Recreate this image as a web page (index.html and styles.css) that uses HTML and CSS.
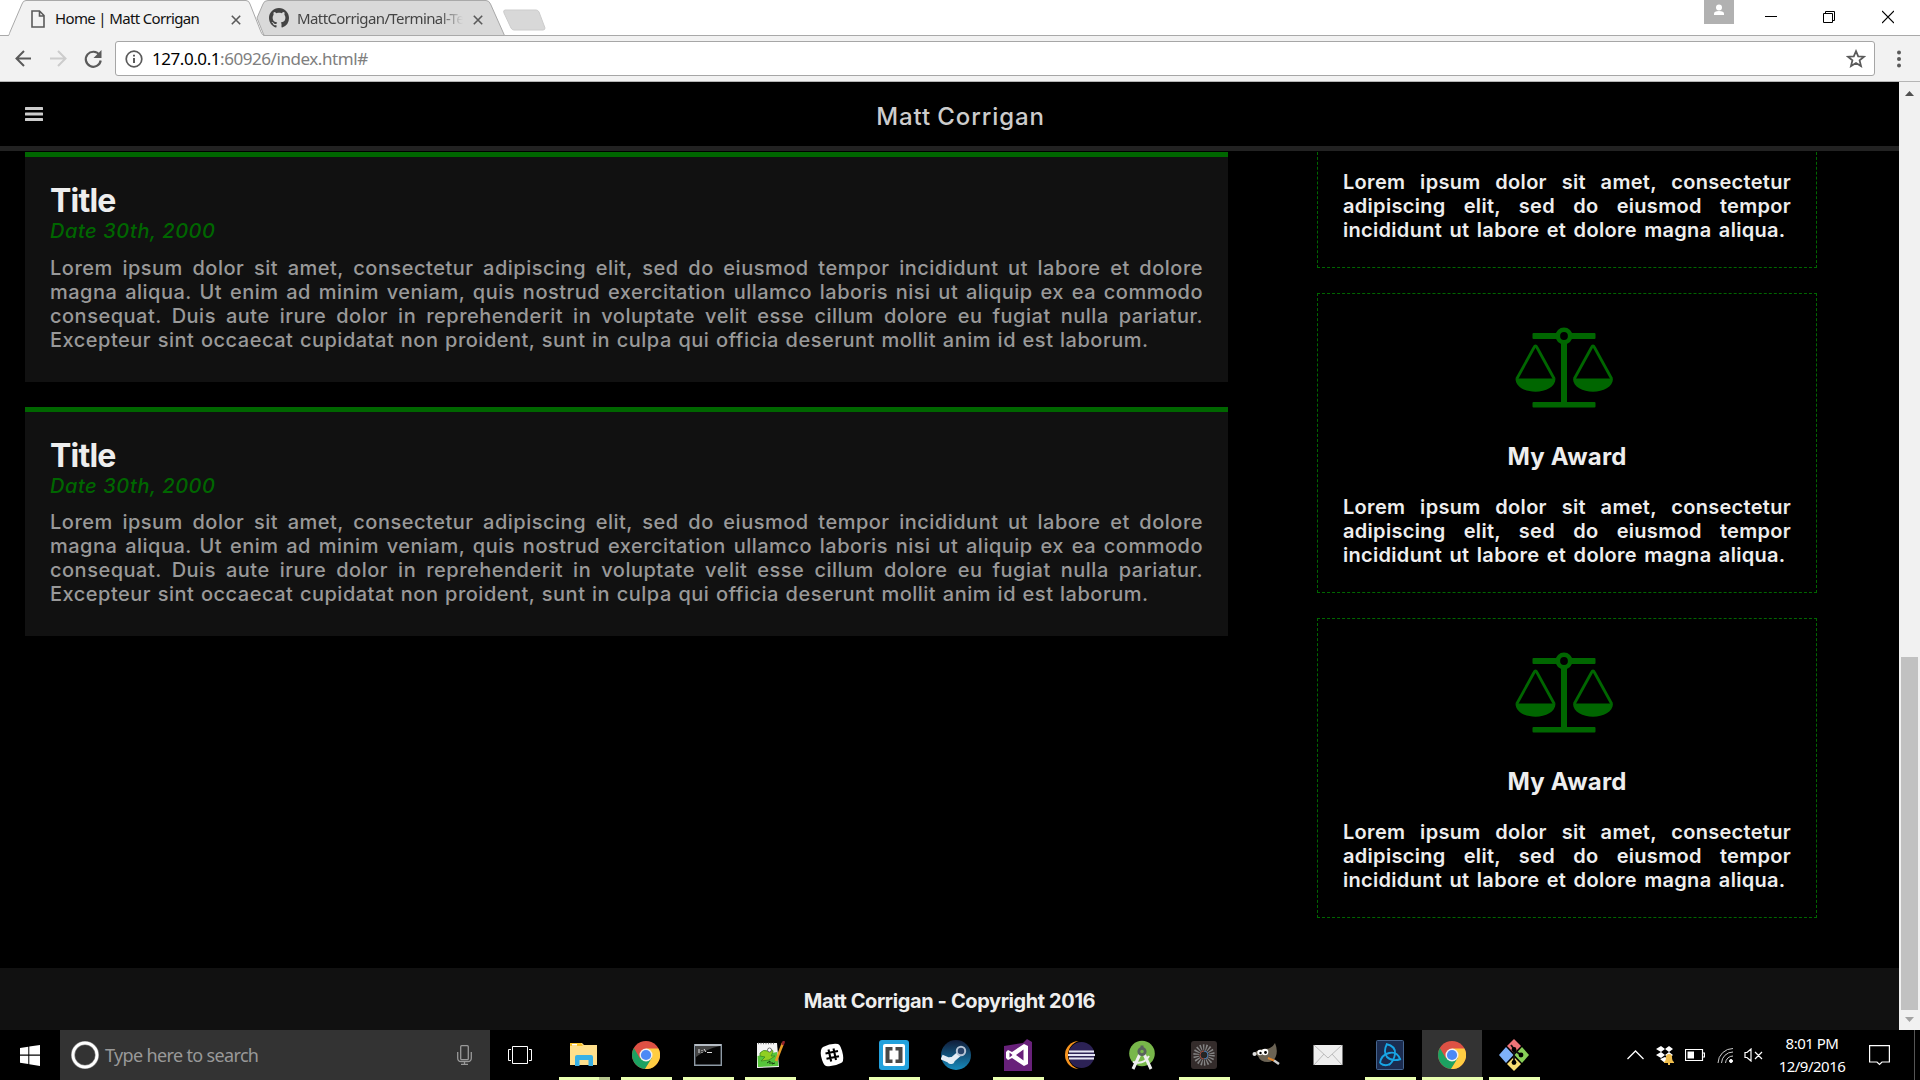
FILE: index.html
```html
<!DOCTYPE html>
<html lang="en">
<head>
<meta charset="utf-8">
<title>Home | Matt Corrigan</title>
<link rel="stylesheet" href="styles.css">
</head>
<body>
<svg class="defs" width="0" height="0">
  <defs>
    <symbol id="scales" viewBox="0 0 98 81">
      <g fill="#060">
        <rect x="17.500" y="6" width="63" height="6" rx="1"/>
        <rect x="17.500" y="75" width="63" height="5.500" rx="1"/>
        <rect x="46" y="12" width="6" height="65"/>
        <path d="M.5 51.500H40.500C40.500 69 .5 69 .5 51.500ZM58 51.500H98C98 69 58 69 58 51.500Z"/>
      </g>
      <circle cx="49" cy="9" r="6.200" fill="#000" stroke="#060" stroke-width="4.600"/>
      <path d="M1.700 52 19 20.500Q20.500 17.500 22 20.500L39.300 52M59.200 52 76.500 20.500Q78 17.500 79.500 20.500L96.800 52" fill="none" stroke="#060" stroke-width="2.800"/>
    </symbol>
    <symbol id="chrome" viewBox="0 0 28 28">
      <circle cx="14" cy="14" r="14" fill="#dd5144"/>
      <path d="M14 14 8 17.500 1.900 7A14 14 0 0 0 13 28L20 17.500Z" fill="#1ca261"/>
      <path d="M14 7.500H26.400A14 14 0 0 1 13 28L19.800 17Z" fill="#ffcd42"/>
      <circle cx="14" cy="14" r="6.500" fill="#f1f1f1"/>
      <circle cx="14" cy="14" r="5.100" fill="#4b89f5"/>
    </symbol>
  </defs>
</svg>

<header class="tabstrip">
  <div class="tab tab-active">
    <svg class="tab-shape" width="260" height="36"><path d="M0 35.500C3 35.500 2 34 3 32L15 4Q16 .5 19 .5H239Q242 .5 243 4L254 32Q255 35.500 258 35.500" fill="#f2f2f2" stroke="#a9a9a9"/><path d="M2 35.500H256" stroke="#f2f2f2"/></svg>
    <svg class="tab-page" width="14" height="18" fill="none" stroke="#5a5a5a" stroke-width="1.600"><path d="M1 1H8.500L13 5.500V17H1ZM8.500 1V6H13"/></svg>
    <span class="tab-title tab-title-home">Home | Matt Corrigan</span>
    <svg class="tab-close" width="10" height="10" stroke="#5a5a5a" stroke-width="1.600"><path d="M.8.8 9.200 9.200M9.200.8.8 9.200"/></svg>
  </div>
  <div class="tab tab-back">
    <svg class="tab-shape" width="252" height="36"><path d="M1 18 7 4Q8 .5 12 .5H230Q233 .5 234.500 4L248.500 35.500H8Z" fill="#d9d9d9" stroke="#a9a9a9"/></svg>
    <svg class="tab-hub" width="20" height="20" viewBox="0 0 16 16" fill="#444"><path d="M8 0C3.580 0 0 3.580 0 8c0 3.540 2.290 6.530 5.470 7.590.4.070.55-.17.55-.38 0-.19-.01-.82-.01-1.490-2.010.37-2.530-.49-2.690-.94-.09-.23-.48-.94-.82-1.130-.28-.15-.68-.52-.01-.53.63-.01 1.080.58 1.230.82.72 1.210 1.870.87 2.330.66.070-.52.280-.87.510-1.070-1.780-.2-3.640-.89-3.640-3.950 0-.87.310-1.590.820-2.150-.08-.2-.36-1.020.080-2.120 0 0 .67-.21 2.200.82.640-.18 1.320-.27 2-.27s1.360.09 2 .27c1.530-1.040 2.200-.82 2.200-.82.440 1.100.160 1.920.080 2.120.510.560.820 1.270.820 2.150 0 3.070-1.870 3.750-3.650 3.950.290.250.540.730.540 1.480 0 1.070-.01 1.930-.01 2.200 0 .21.150.46.550.38A8.010 8.010 0 0 0 16 8c0-4.420-3.580-8-8-8z"/></svg>
    <span class="tab-title tab-title-hub">MattCorrigan/Terminal-Te</span>
    <svg class="tab-close" width="10" height="10" stroke="#5a5a5a" stroke-width="1.600"><path d="M.8.8 9.200 9.200M9.200.8.8 9.200"/></svg>
  </div>
  <svg class="newtab" width="44" height="22"><path d="M2 1H33Q35 1 36 3L42 19Q42 21 40 21H11Q9 21 8 19L1 4Q0 1 2 1Z" fill="#d8d8d8" stroke="#ccc"/></svg>
  <div class="window-controls">
    <svg class="profile" width="30" height="24"><path fill="#b1b1b1" d="M0 0H30V24H0Z"/><circle cx="15" cy="7.500" r="3" fill="#fff"/><path d="M10 15V13.500Q10 11 15 11T20 13.500V15Z" fill="#fff"/></svg>
    <svg class="minimize" width="12" height="24"><path d="M0 16.500H12" stroke="#000"/></svg>
    <svg class="restore" width="12" height="24" fill="none" stroke="#000"><path d="M.5 13.500H9.500V22.500H.5ZM2.500 13V11.500H11.500V20.500H10"/></svg>
    <svg class="shut" width="12" height="24" stroke="#000" stroke-width="1.200"><path d="M0 11 12 23M12 11 0 23"/></svg>
  </div>
</header>

<div class="toolbar">
  <svg width="100" height="24" class="nav-icons" fill="none" stroke-width="2">
    <path d="M16 12.500H1.500M9 5 1.500 12.500 9 20" stroke="#5a5a5a"/>
    <path d="M35 12.500H50M43 5 50.500 12.500 43 20" stroke="#ccc"/>
    <path d="M84.500 9A7.500 7.500 0 1 0 85.700 14.500" stroke="#5a5a5a" stroke-width="2.200"/>
    <path d="M86.500 4V12H78.500Z" fill="#5a5a5a"/>
  </svg>
  <div class="omnibox">
    <svg width="18" height="18" fill="none" stroke="#5a5a5a" stroke-width="1.700"><circle cx="9" cy="9" r="7.800"/><path d="M9 8V13M9 4.800V6.600" stroke-width="2"/></svg>
    <span class="url"><b>127.0.0.1</b>:60926/index.html#</span>
    <svg class="star" width="20" height="19" viewBox="0 0 20 19" fill="none" stroke="#5a5a5a" stroke-width="1.800"><path d="M10 2.200 12.200 7.300 18 7.700 13.600 11.400 15 17 10 14 5 17 6.400 11.400 2 7.700 7.800 7.300Z"/></svg>
  </div>
  <svg class="dots" width="6" height="18" fill="#5a5a5a"><circle cx="3" cy="2.500" r="2"/><circle cx="3" cy="9" r="2"/><circle cx="3" cy="15.500" r="2"/></svg>
</div>

<div class="viewport">
  <div class="page">
    <nav class="navbar">
      <svg class="menu" width="18" height="16" fill="#ccc"><rect y="1" width="18" height="3" rx=".6"/><rect y="6.500" width="18" height="3" rx=".6"/><rect y="12" width="18" height="3" rx=".6"/></svg>
      <span class="brand">Matt Corrigan</span>
    </nav>
    <main class="content">
      <section class="posts">
        <article class="post">
          <h2>Title</h2>
          <em class="date">Date 30th, 2000</em>
          <p><span>Lorem ipsum dolor sit amet, consectetur adipiscing elit, sed do eiusmod tempor incididunt ut labore et dolore</span>
          <span>magna aliqua. Ut enim ad minim veniam, quis nostrud exercitation ullamco laboris nisi ut aliquip ex ea commodo</span>
          <span>consequat. Duis aute irure dolor in reprehenderit in voluptate velit esse cillum dolore eu fugiat nulla pariatur.</span>
          <span class="last">Excepteur sint occaecat cupidatat non proident, sunt in culpa qui officia deserunt mollit anim id est laborum.</span></p>
        </article>
        <article class="post">
          <h2>Title</h2>
          <em class="date">Date 30th, 2000</em>
          <p><span>Lorem ipsum dolor sit amet, consectetur adipiscing elit, sed do eiusmod tempor incididunt ut labore et dolore</span>
          <span>magna aliqua. Ut enim ad minim veniam, quis nostrud exercitation ullamco laboris nisi ut aliquip ex ea commodo</span>
          <span>consequat. Duis aute irure dolor in reprehenderit in voluptate velit esse cillum dolore eu fugiat nulla pariatur.</span>
          <span class="last">Excepteur sint occaecat cupidatat non proident, sunt in culpa qui officia deserunt mollit anim id est laborum.</span></p>
        </article>
      </section>
      <aside class="awards">
        <div class="award award-cut">
          <p><span>Lorem ipsum dolor sit amet, consectetur</span>
          <span>adipiscing elit, sed do eiusmod tempor</span>
          <span class="last">incididunt ut labore et dolore magna aliqua.</span></p>
        </div>
        <div class="award">
          <svg class="scales" width="98" height="81"><use href="#scales"/></svg>
          <h3>My Award</h3>
          <p><span>Lorem ipsum dolor sit amet, consectetur</span>
          <span>adipiscing elit, sed do eiusmod tempor</span>
          <span class="last">incididunt ut labore et dolore magna aliqua.</span></p>
        </div>
        <div class="award">
          <svg class="scales" width="98" height="81"><use href="#scales"/></svg>
          <h3>My Award</h3>
          <p><span>Lorem ipsum dolor sit amet, consectetur</span>
          <span>adipiscing elit, sed do eiusmod tempor</span>
          <span class="last">incididunt ut labore et dolore magna aliqua.</span></p>
        </div>
      </aside>
    </main>
    <footer class="footer"><span>Matt Corrigan - Copyright 2016</span></footer>
  </div>
  <div class="scrollbar">
    <svg width="9" height="5"><path d="M0 5 4.500 0 9 5Z" fill="#505050"/></svg>
    <div class="thumb"></div>
    <svg width="9" height="5"><path d="M0 0H9L4.500 5Z" fill="#a3a3a3"/></svg>
  </div>
</div>

<div class="taskbar">
  <svg class="start" width="20" height="21" fill="#fff"><path d="M0 3 8.300 1.700V9.500H0ZM9.300 1.500 20 0V9.500H9.300ZM0 10.700H8.300V19L0 17.700ZM9.300 10.700H20V21L9.300 19.300Z"/></svg>
  <div class="search">
    <svg width="28" height="28"><circle cx="14" cy="14" r="12" fill="none" stroke="#888" stroke-width="4"/><circle cx="14" cy="14" r="12" fill="none" stroke="#fff" stroke-width="2.800"/></svg>
    <span>Type here to search</span>
    <svg class="mic" width="15" height="20" fill="none" stroke="#999" stroke-width="1.300"><rect x="3.700" y=".7" width="7.600" height="14" rx="1"/><path d="M.7 7V13Q.7 16.500 4 16.500H11Q14.300 16.500 14.300 13V7M7.500 17V19.300M4 19.300H11"/></svg>
  </div>
  <svg class="taskview" width="24" height="20" fill="none" stroke="#fff"><path d="M4.500 1.500H19.500V18.500H4.500ZM3 4.500H.5V15.500H3M21 4.500H23.500V15.500H21"/></svg>
  <div class="apps">
    <div class="app open grouped"><svg width="30" height="30"><path d="M1 4V3H13L15 5H28V25H1Z" fill="#ffe08c"/><path d="M1 3H12L14 6H1Z" fill="#f9c22b"/><path d="M3 4H8V5.500H3Z" fill="#fff"/><path d="M6 26V17Q6 15 8 15H22Q24 15 24 17V26H19.500V20H10.500V26Z" fill="#38b1e6"/></svg></div>
    <div class="app open"><svg width="28" height="28"><use href="#chrome"/></svg></div>
    <div class="app open"><svg width="28" height="24"><path d="M.7 1.700H27.300V22.300H.7Z" fill="#050505" stroke="#8e9aa5" stroke-width="1.400"/><path d="M1 1H27V3H1Z" fill="#b5bcc4"/><path d="M2 3H26Q12 6 2 14Z" fill="#444"/><path d="M4 7H6M4 9H6M8 7V8M8 9V10M10 6 12 9M13 9.500H18" stroke="#ddd"/></svg></div>
    <div class="app open"><svg width="30" height="28"><path d="M2 2H22L24 26 2 27Z" fill="#f4f4f4"/><path d="M2.500 15 22 11 23.500 25 3 26Z" fill="#57c63b"/><path d="M3 2.500H20" stroke="#777" stroke-width="1.600" stroke-dasharray="1 1.500"/><path d="M5 12Q8 8 13 10 18 7 18 11L16 15H20L14 19 6 20 10 16 5 15Z" fill="#91cf21" stroke="#3c8a24" stroke-width=".8"/><circle cx="14.500" cy="9" r="2" fill="#fff" stroke="#555" stroke-width=".8"/><path d="M12 22 15 20V23M17 21V23L20 22" stroke="#163a10" fill="none"/><path d="M28 2 21 20" stroke="#e69c24" stroke-width="2.500"/><path d="M29 0 27.500 4" stroke="#94232d" stroke-width="2.500"/></svg></div>
    <div class="app"><svg width="24" height="24"><path d="M3 4Q11 0 18 1 21 2 23 12 24 19 21 20 14 24 6 23 3 22 1 13 0 6 3 4Z" fill="#fff"/><path d="M8.500 6.500 11.200 18.500M13.500 5.500 16 17M5.500 10.500 18 8M6.500 15.700 19 13.200" stroke="#000" stroke-width="2.100"/></svg></div>
    <div class="app open"><svg width="30" height="30"><rect width="30" height="30" rx="3" fill="#22a1dd"/><rect x="4" y="4" width="22" height="22" rx="2" fill="#fff"/><path d="M13.500 7V10.500H10.500V19.500H13.500V23H6.500V7ZM16.500 7H23.500V23H16.500V19.500H19.500V10.500H16.500Z" fill="#484848"/></svg></div>
    <div class="app"><svg width="30" height="30"><defs><linearGradient id="steam" x2="0" y2="1"><stop stop-color="#101b38"/><stop offset="1" stop-color="#178bbd"/></linearGradient></defs><circle cx="15" cy="15" r="15" fill="url(#steam)"/><path d="M.6 17 10 21 18 14" stroke="#e5edf5" stroke-width="5" fill="none"/><circle cx="10" cy="20.500" r="3.500" fill="#e5edf5"/><circle cx="20" cy="11" r="4.200" fill="#29446a" stroke="#b6c4d5" stroke-width="2"/></svg></div>
    <div class="app open"><svg width="30" height="32"><path d="M1 7 20 4 24 0 29 3V32H1Z" fill="#68217a"/><path d="M5 11 9 13 21 5 25 7V25L21 27 9 19 5 21 3 19V13Z" fill="#fff"/><path d="M6.500 13.500V18.500L9.500 16ZM13 16 20.500 10.500V21.500Z" fill="#68217a"/></svg></div>
    <div class="app"><svg width="30" height="30"><circle cx="14" cy="15" r="14" fill="#f7941e"/><circle cx="17.500" cy="15" r="14.500" fill="#000"/><circle cx="16.500" cy="15" r="13" fill="#2c2255"/><path d="M4 11.500H29M3 15H30M4 18.500H29" stroke="#e5e5f4" stroke-width="2"/></svg></div>
    <div class="app"><svg width="28" height="30"><circle cx="14" cy="13.500" r="12.800" fill="#78b74a"/><path d="M12 14 5 29M16 14 23 29" stroke="#eee" stroke-width="3"/><path d="M5 22Q16 25 21 16" fill="none" stroke="#eee" stroke-width="2"/><circle cx="14" cy="11.500" r="3.200" fill="none" stroke="#59635c" stroke-width="2.800"/><path d="M14 5.500V9" stroke="#59635c" stroke-width="3"/></svg></div>
    <div class="app open"><svg width="28" height="30"><rect x="1" y="1" width="26" height="28" rx="3" fill="#342c2b"/><circle cx="14" cy="15" r="7.700" fill="none" stroke="#858585" stroke-width="6" stroke-dasharray="1.300 1.400"/><circle cx="14" cy="15" r="4" fill="#252525" stroke="#9b4c3e"/><path d="M14 11A4 4 0 0 1 14 19" stroke="#3679b1" fill="none"/></svg></div>
    <div class="app"><svg width="30" height="26"><path d="M3 11Q8 7 14 7 21 7 24 1 27 8 25 14 23 20 17 20 9 20 7 14Z" fill="#6b6354"/><circle cx="3.500" cy="12" r="2" fill="#ddd"/><circle cx="9" cy="10.500" r="2.700" fill="#fff"/><circle cx="14" cy="10" r="3.300" fill="#fff"/><circle cx="9.500" cy="11" r="1.200"/><circle cx="14.500" cy="10.500" r="1.400"/><path d="M17 16 24 19" stroke="#e4872c" stroke-width="2"/><path d="M23 18.500 28 22" stroke="#ccc" stroke-width="2.500"/></svg></div>
    <div class="app"><svg width="30" height="22"><rect x=".5" y="1" width="29" height="20" fill="#eee"/><path d="M1 1 15 14 29 1M1 21 11 10M29 21 19 10" fill="none" stroke="#bbb"/></svg></div>
    <div class="app open"><svg width="28" height="30"><rect x=".5" y=".5" width="27" height="29" rx="1" fill="#1b2c50" stroke="#45658f"/><g fill="none" stroke="#18a5e5" stroke-width="1.900"><path d="M10 4Q20 6 19 14 18 21 13 25"/><path d="M11 4Q7 11 11 17 16 22 25 19"/><path d="M4 23Q5 15 13 13 21 11 24 19"/><path d="M4 23Q9 27 14 24"/></g></svg></div>
    <div class="app open current"><svg width="28" height="28"><use href="#chrome"/></svg></div>
    <div class="app open"><svg width="30" height="32"><path d="M15 0 22 7 15 14 8 7Z" fill="#ef7479"/><path d="M7 8 14.500 16 7 24 0 16Z" fill="#7eb1fa"/><path d="M23 8 30 16 23 24 15.500 16Z" fill="#87cf58"/><path d="M15 18 22 25 15 32 8 25Z" fill="#f9dd72"/><path d="M12 6 15 10V24M15 11 22 16" fill="none" stroke="#111" stroke-width="1.800"/><circle cx="15" cy="10.500" r="2.400"/><circle cx="15" cy="23.500" r="2.400"/><circle cx="22" cy="16" r="2.400"/></svg></div>
  </div>
  <div class="tray">
    <svg width="17" height="10" fill="none" stroke="#fff" stroke-width="1.300"><path d="M.5 9 8.500 1 16.500 9"/></svg>
    <svg class="dropbox" width="18" height="19"><path d="M5 0 9 3 13 0 17 3 13 6 17 9 13 12 9 9 5 12 0 9 5 6 0 3ZM9 3 5 6 9 9 13 6ZM4 13 9 11 14 14 9 17Z" fill="#fff" fill-rule="evenodd"/><path d="M8 16Q10 15 10 11 10 8 13 8T16 11Q16 15 18 16V17H8ZM12 17H14V19H12Z" fill="#efbd4d"/></svg>
    <svg class="battery" width="20" height="12"><path d="M.5.5H17.500V11.500H.5ZM18 4H19.500V8H18" fill="none" stroke="#fff" stroke-width="1.200"/><path d="M2.500 2.500H9V9.500H2.500Z" fill="#fff"/></svg>
    <svg class="wifi" width="17" height="16" fill="none" stroke="#fff"><path d="M1 16A15 15 0 0 1 16 1.500M4.500 16A11.500 11.500 0 0 1 16 5M8.500 16A7.500 7.500 0 0 1 16 9" stroke="#ccc"/><circle cx="14" cy="14" r="1.500" fill="#fff"/></svg>
    <svg class="sound" width="19" height="14" fill="none" stroke="#fff" stroke-width="1.200"><path d="M1 4.500H3L7 1V13L3 9.500H1ZM11 4 18 11M18 4 11 11"/></svg>
    <div class="clock"><span>8:01 PM</span><span>12/9/2016</span></div>
    <svg class="notices" width="21" height="21" fill="none" stroke="#fff" stroke-width="1.200"><path d="M.6.600H20.400V17H13L10.500 19.500 8 17H.6Z"/></svg>
    <div class="peek"></div>
  </div>
</div>
</body>
</html>
```
FILE: styles.css
```css
* { box-sizing: border-box; }
html, body { margin: 0; padding: 0; }
body {
  width: 1920px;
  height: 1080px;
  overflow: hidden;
  display: flex;
  flex-direction: column;
  background: #000;
  font-family: "Noto Sans", "Open Sans", sans-serif;
}
svg { display: block; flex: none; }
.defs { position: absolute; }

/* browser chrome */
.tabstrip {
  height: 36px;
  flex: none;
  display: flex;
  background: #fff;
  box-shadow: inset 0 -1px #a9a9a9;
}
.tab { position: relative; height: 36px; display: flex; align-items: center; }
.tab-shape { position: absolute; left: 0; top: 0; }
.tab > :not(.tab-shape) { position: relative; }
.tab-active { width: 249px; margin-left: 7px; padding-left: 24px; z-index: 1; }
.tab-back { width: 247px; padding-left: 13px; }
.tab-page { margin-right: 10px; margin-top: 2px; }
.tab-title { font-size: 15px; line-height: 20px; white-space: nowrap; }
.tab-title-home { width: 176px; letter-spacing: -0.65px; color: #111; }
.tab-hub { margin-right: 8px; }
.tab-title-hub {
  width: 166px;
  margin-right: 10px;
  letter-spacing: -0.6px;
  color: #444;
  -webkit-mask-image: linear-gradient(90deg, #000 142px, transparent 166px);
  mask-image: linear-gradient(90deg, #000 142px, transparent 166px);
}
.tab-close { margin-top: 3px; }
.newtab { margin-top: 9px; }
.window-controls { display: flex; margin-left: auto; padding-right: 26px; }
.minimize { margin-left: 31px; }
.restore { margin-left: 46px; }
.shut { margin-left: 47px; }

.toolbar {
  height: 46px;
  flex: none;
  display: flex;
  padding: 5px 18px 0 15px;
  background: #f2f2f2;
  border-bottom: 1px solid #b5b5b5;
}
.nav-icons { margin-top: 5px; }
.omnibox {
  width: 1760px;
  height: 35px;
  display: flex;
  align-items: center;
  padding: 0 8px 0 9px;
  background: #fff;
  border: 1px solid #a6a6a6;
  border-radius: 3px;
}
.url { margin-left: 9px; font-size: 17px; letter-spacing: -0.44px; color: #808080; }
.url b { font-weight: 400; color: #000; }
.star { margin-left: auto; }
.dots { margin: 9px 0 0 21px; }

/* page */
.viewport { height: 948px; flex: none; display: flex; }
.page {
  width: 1899px;
  display: flex;
  flex-direction: column;
  color: #eee;
  font-family: "Inter", sans-serif;
}
.navbar {
  height: 69px;
  flex: none;
  display: grid;
  grid-template-columns: 18px 1fr 18px;
  align-items: center;
  padding: 0 4px 0 25px;
  border-bottom: 5px solid #222;
}
.brand { text-align: center; color: #ccc; font-size: 24px; font-weight: 500; letter-spacing: 0.9px; word-spacing: -1px; padding: 5px 0 0 1px; }
.content { height: 817px; flex: none; display: flex; padding: 1px 0 0 25px; }
.posts { width: 1203px; display: flex; flex-direction: column; gap: 25px; }
.post { height: 229.5px; padding: 25px; border-top: 5px solid #060; background: #111; }
.post h2 { margin: 0; font-size: 32px; line-height: 37px; letter-spacing: -0.8px; }
.date { display: block; color: #060; font-size: 20px; line-height: 24px; font-weight: 500; letter-spacing: 0.55px; }
p { margin: 12.5px 0 0; font-size: 20px; line-height: 24px; }
p span { display: block; white-space: nowrap; text-align: justify; text-align-last: justify; }
.post p { color: #999; font-weight: 500; letter-spacing: 0.5px; }
.post .last { width: 1098.5px; }

.awards { width: 500px; margin-left: 89px; display: flex; flex-direction: column; gap: 25px; }
.award { height: 300px; flex: none; padding: 25px; border: 1px dashed #060; text-align: center; }
.award-cut { height: 116px; border-top: 0; padding-top: 18px; }
.award p { margin: 24px 0 0; font-weight: 600; letter-spacing: 0.3px; }
.award-cut p { margin: 0; }
.award .last { width: 442.5px; }
.scales { margin: 8px 0 0 172px; }
.award h3 { margin: 34px 0 0; font-size: 24px; line-height: 29px; letter-spacing: 0.2px; }
.footer {
  height: 62px;
  display: flex;
  align-items: center;
  justify-content: center;
  padding-top: 3px;
  background: #111;
  font-size: 20px;
  font-weight: 700;
  letter-spacing: -0.4px;
}
.scrollbar {
  width: 21px;
  display: flex;
  flex-direction: column;
  align-items: center;
  padding: 9px 0 8px;
  background: #f1f1f1;
}
.thumb { width: 17px; height: 353px; margin: auto 0 7px; background: #c1c1c1; }

/* taskbar */
.taskbar { height: 50px; flex: none; display: flex; align-items: center; background: #000; color: #fff; }
.start { margin: 0 20px; }
.search {
  width: 430px;
  height: 50px;
  display: flex;
  align-items: center;
  padding: 0 18px 0 11px;
  background: #333;
  color: #999;
  font-size: 18px;
}
.search span { margin-left: 6px; letter-spacing: -0.65px; }
.mic { margin-left: auto; }
.taskview { margin: 0 21px 0 18px; }
.apps { display: flex; height: 50px; }
.app { position: relative; width: 62px; height: 50px; display: flex; align-items: center; justify-content: center; }
.open::after { content: ""; position: absolute; left: 6px; bottom: 0; width: 51px; height: 3px; background: #e9ffb0; }
.grouped::after { background: linear-gradient(90deg, #e9ffb0 40px, #b5c48d 40px); }
.current { background: linear-gradient(90deg, transparent 1px, #333 1px, #333 61px, transparent 61px); }
.current::after { left: 1px; width: 61px; }
.tray { display: flex; align-items: center; flex: 1; height: 50px; padding-left: 82px; }
.dropbox { margin-left: 12px; }
.battery { margin-left: 11px; }
.wifi { margin-left: 12px; }
.sound { margin-left: 10px; }
.clock {
  width: 80px;
  margin-left: 9px;
  display: flex;
  flex-direction: column;
  text-align: center;
  font-size: 15px;
  line-height: 23px;
  letter-spacing: -0.5px;
}
.notices { margin-left: 17px; }
.peek { width: 1px; height: 50px; margin-left: 24px; background: #555; }
```
